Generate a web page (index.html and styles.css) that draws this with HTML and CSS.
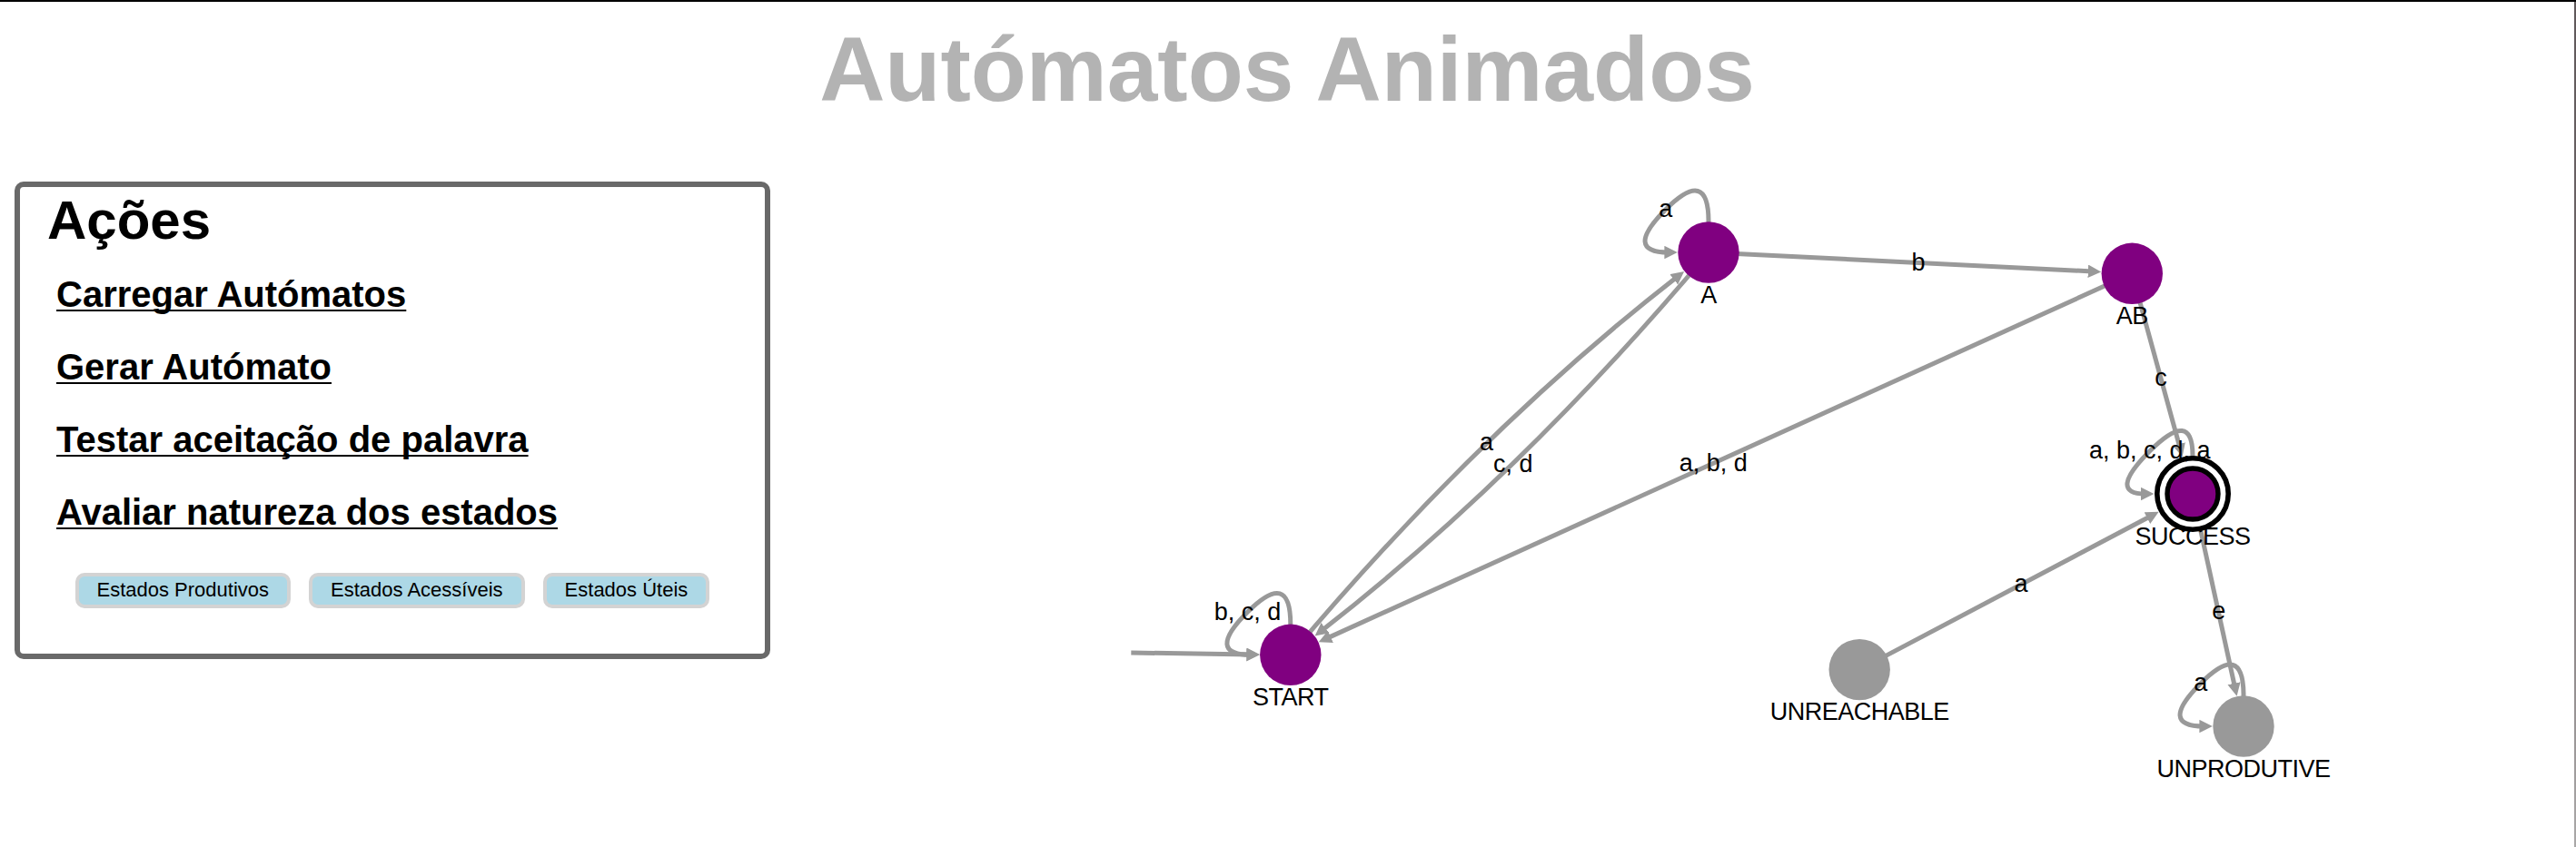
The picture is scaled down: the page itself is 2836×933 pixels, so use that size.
FILE: index.html
```html
<!DOCTYPE html>
<html lang="pt">
<head>
    <meta charset="UTF-8">
    <meta name="viewport" content="width=device-width, initial-scale=1.0">
    <title>Autómatos Animados</title>
    <link rel="stylesheet" href="styles.css">
</head>
<body>

    <h1 class="title">Autómatos Animados</h1>

    <main class="content">
        <!-- Menu -->
        <section class="actions">
            <h2>Ações</h2>
            <ul class="menu">
                <li><a>Carregar Autómatos</a></li>
                <li><a>Gerar Autómato</a></li>
                <li><a>Testar aceitação de palavra</a></li>
                <li><a>Avaliar natureza dos estados</a></li>
            </ul>
            <div class="state-buttons">
                <button>Estados Produtivos</button>
                <button>Estados Acessíveis</button>
                <button>Estados Úteis</button>
            </div>
        </section>

        <!-- Automaton -->
        <svg class="graph" viewBox="848 200 1986 733">
            <defs>
                <marker id="arrow" markerUnits="userSpaceOnUse" markerWidth="15" markerHeight="15" refX="5" refY="7.2" orient="auto">
                    <path d="M0 0L14.4 7.2L0 14.4Z" fill="#999"/>
                </marker>
            </defs>

            <g class="edges">
                <path d="M1245.3 719L1377.6 720.9"/>
                <path d="M1420.8 721.3Q1627.6 475.3 1846.7 304.7"/>
                <path d="M1881 278Q1674.4 523.9 1455 694.7"/>
                <path d="M1881 278L2303.8 299"/>
                <path d="M2347.3 301.3L1460.3 703.4"/>
                <path d="M2347.3 301.3L2400.2 494"/>
                <path d="M2047.2 737.6L2368.3 568.2"/>
                <path d="M2414 544L2460.6 757.6"/>
                <!-- loops -->
                <path d="M1881 278V244Q1881 183.6 1833.8 230.8T1837.4 278"/>
                <path d="M1420.8 721.3V688Q1420.8 626.9 1373.6 674.1T1377.2 721.3"/>
                <path d="M2414 544V502Q2414 449.6 2366.8 496.8T2362 544"/>
                <path d="M2470 800V766Q2470 705.6 2422.8 752.8T2426.4 800"/>
            </g>

            <g class="nodes">
                <circle cx="1420.8" cy="721.3" r="33.7"/>
                <circle cx="1881" cy="278" r="33.7"/>
                <circle cx="2347.3" cy="301.3" r="33.7"/>
                <circle class="final-outer" cx="2414" cy="544" r="39.2"/>
                <circle class="final-inner" cx="2414" cy="544" r="28"/>
                <circle class="useless" cx="2047.2" cy="737.6" r="33.7"/>
                <circle class="useless" cx="2470" cy="800" r="33.7"/>
            </g>

            <g class="labels names">
                <text x="1420.8" y="777">START</text>
                <text x="1881" y="333.7">A</text>
                <text x="2347.3" y="357">AB</text>
                <text x="2414" y="599.5">SUCCESS</text>
                <text x="2047.2" y="793.3">UNREACHABLE</text>
                <text x="2470" y="855.7">UNPRODUTIVE</text>
            </g>

            <g class="labels">
                <text x="1833.8" y="239.3">a</text>
                <text x="1373.4" y="682.6">b, c, d</text>
                <text x="2366.8" y="504.9">a, b, c, d, a</text>
                <text x="2422.8" y="761.3">a</text>
                <text x="1636.5" y="496">a</text>
                <text x="1665.7" y="520">c, d</text>
                <text x="2112" y="298">b</text>
                <text x="1886.3" y="519">a, b, d</text>
                <text x="2379" y="424.6">c</text>
                <text x="2225" y="652">a</text>
                <text x="2442.7" y="682">e</text>
            </g>
        </svg>
    </main>

</body>
</html>
```
FILE: styles.css
```css
* {
    box-sizing: border-box;
}

html {
    background: white;
}

/* thin strip down the right edge */
body {
    margin: 0;
    height: 933px;
    padding-right: 2px;
    background: linear-gradient(#5f585a, #766d70 55%, #aaa8a8) right top / 2px 100% no-repeat;
    border-top: 2px solid black;
    font-family: "Liberation Sans", Helvetica, Arial, sans-serif;
    color: black;
    overflow: hidden;
}

.title {
    margin: 0;
    height: 198px;
    padding-top: 17px;
    font-size: 100px;
    line-height: 115px;
    text-align: center;
    color: #b3b3b3;
}

.content {
    display: flex;
    align-items: flex-start;
    height: 733px;
}

.actions {
    flex: none;
    width: 832px;
    height: 526px;
    margin-left: 16px;
    padding: 3px 30px;
    border: 6px solid #696969;
    border-radius: 10px;
}

.actions h2 {
    margin: 0;
    font-size: 60px;
    line-height: 68px;
}

.menu {
    list-style: none;
    margin: 7px 0 0;
    padding: 0 10px;
}

.menu li {
    height: 80px;
    font-size: 40px;
    font-weight: bold;
    line-height: 80px;
}

.menu a {
    text-decoration: underline;
    text-decoration-thickness: 2px;
    text-underline-offset: 3px;
    text-decoration-skip-ink: none;
}

/* State buttons */
.state-buttons {
    display: flex;
    gap: 20px;
    margin-top: 27px;
    padding-left: 30.5px;
}

.state-buttons button {
    height: 39px;
    padding: 0 20px 3px;
    border: 4px solid lightgray;
    border-radius: 10px;
    background: lightblue;
    font-family: inherit;
    font-size: 22px;
    line-height: 25px;
    color: black;
}

/* Graph */
.graph {
    flex: none;
    width: 1986px;
    height: 733px;
}

.edges path {
    fill: none;
    stroke: #999;
    stroke-width: 5;
    marker-end: url(#arrow);
}

.nodes circle {
    fill: purple;
}

.nodes .useless {
    fill: #999;
}

.nodes .final-outer {
    fill: white;
    stroke: black;
    stroke-width: 5.6;
}

.nodes .final-inner {
    stroke: black;
    stroke-width: 5.4;
}

.labels text {
    font-size: 27px;
    text-anchor: middle;
}

.names text {
    letter-spacing: -0.5px;
}
```
